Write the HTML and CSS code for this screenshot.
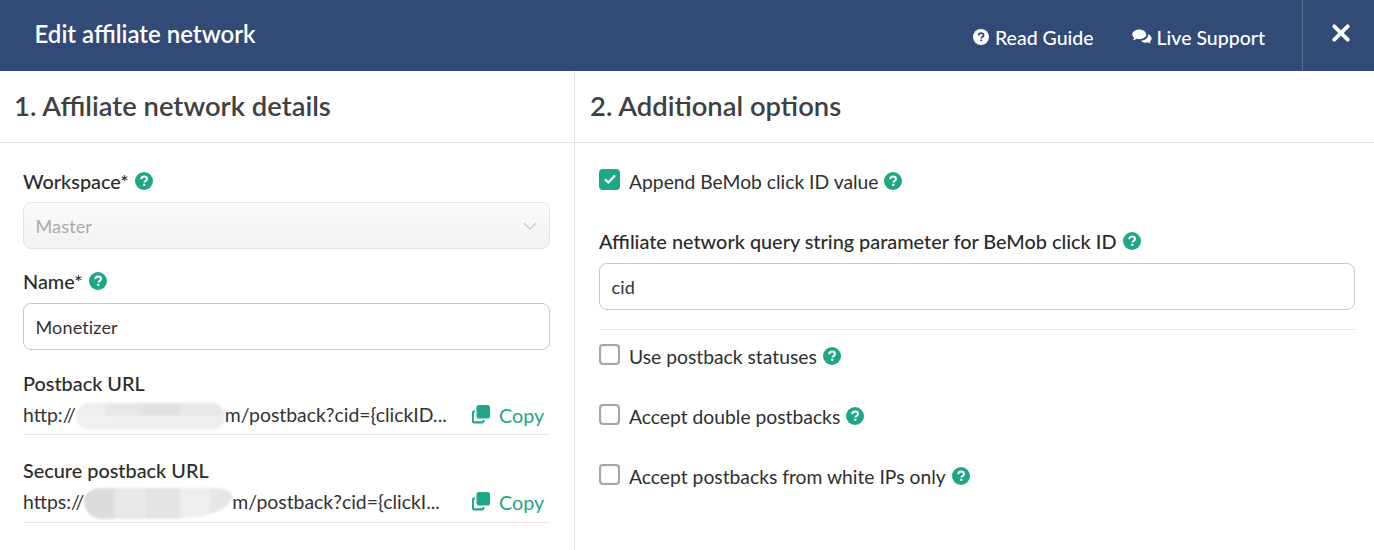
FILE: index.html
```html
<!DOCTYPE html>
<html lang="en">
<head>
<meta charset="utf-8">
<title>Edit affiliate network</title>
<link rel="stylesheet" href="styles.css">
</head>
<body>
<svg class="defs" width="0" height="0" aria-hidden="true">
  <symbol id="help" viewBox="0 0 18 18">
    <circle cx="9" cy="9" r="9" fill="currentColor"/>
    <path class="q" d="M6.200 7.200C6.300 5.500 7.500 4.600 9.100 4.600c1.700 0 2.800.9 2.800 2.300 0 1-.5 1.600-1.500 2.200-.7.400-.9.700-.9 1.300v.2" fill="none" stroke-width="2"/>
    <rect class="qd" x="8.200" y="11.800" width="2.100" height="2.100" rx=".4"/>
  </symbol>
  <symbol id="copy" viewBox="0 0 20 20">
    <path d="M1 8.500a2 2 0 0 1 2-2h1v2H3.200a.300.300 0 0 0-.3.300v7.700c0 .4.300.7.700.7h7.500a.400.400 0 0 0 .4-.4V16h2v1a2.500 2.500 0 0 1-2.500 2.500H3.500A2.500 2.500 0 0 1 1 17z" fill="currentColor"/>
    <rect x="5.500" y="1" width="13.500" height="13.500" rx="2.600" fill="currentColor"/>
  </symbol>
</svg>

<header class="topbar">
  <h1 class="topbar-title">Edit affiliate network</h1>
  <nav class="topbar-links">
    <a class="topbar-link">
      <svg class="topbar-icon" width="16" height="16"><use href="#help"/></svg>
      Read Guide
    </a>
    <a class="topbar-link">
      <svg class="topbar-chat" width="20" height="16" viewBox="0 0 20 16">
        <path d="M7.300 .5C3.500.5.300 2.800.3 5.600c0 1.300.7 2.500 1.900 3.400-.2.800-.7 1.500-1.300 2.100 1.300-.1 2.600-.6 3.500-1.300 .9.300 1.900.5 2.900.5 3.900 0 7-2.200 7-4.700S11.200.5 7.300.5z" fill="#fff"/>
        <path d="M16 5.200c.1.300.1.600.1.800 0 3.100-3.200 5.500-7.100 5.700 1 1.300 2.600 2 4.500 2 .8 0 1.600-.1 2.300-.4.800.7 1.800 1.100 3.200 1.300-.5-.5-1-1.300-1.200-2.100 1-.8 1.800-1.900 1.800-3.100 0-1.800-1.400-3.400-3.600-4.200z" fill="#fff"/>
      </svg>
      Live Support
    </a>
  </nav>
  <button class="topbar-close" type="button" aria-label="Close">
    <svg width="18" height="18" viewBox="0 0 18 18"><path d="M2.300 2.300l13.400 13.400M15.700 2.300L2.300 15.700" stroke="#fff" stroke-width="3.800" stroke-linecap="round" fill="none"/></svg>
  </button>
</header>

<main class="columns">
  <section class="col col-left">
    <h2 class="col-title">1. Affiliate network details</h2>
    <div class="col-body form-left">
      <div class="field field-workspace">
        <div class="label">Workspace* <svg class="help" width="18" height="18"><use href="#help"/></svg></div>
        <div class="input input-disabled">
          <span>Master</span>
          <svg class="chev" width="14" height="8" viewBox="0 0 14 8"><path d="M1 1l6 6 6-6" fill="none" stroke="#c9c9c9" stroke-width="1.300"/></svg>
        </div>
      </div>
      <div class="field field-name">
        <div class="label">Name* <svg class="help" width="18" height="18"><use href="#help"/></svg></div>
        <div class="input">Monetizer</div>
      </div>
      <div class="field field-url">
        <div class="label">Postback URL</div>
        <div class="url-row">
          <div class="url-text">http://<span class="blob blob-a"></span>m/postback?cid={clickID...</div>
          <a class="copy"><svg width="20" height="20"><use href="#copy"/></svg>Copy</a>
        </div>
      </div>
      <div class="field field-url2">
        <div class="label">Secure postback URL</div>
        <div class="url-row">
          <div class="url-text">https://<span class="blob blob-b"></span>m/postback?cid={clickI...</div>
          <a class="copy"><svg width="20" height="20"><use href="#copy"/></svg>Copy</a>
        </div>
      </div>
    </div>
  </section>

  <section class="col col-right">
    <h2 class="col-title">2. Additional options</h2>
    <div class="col-body form-right">
      <label class="check check-first">
        <span class="box box-on">
          <svg width="14" height="12" viewBox="0 0 14 12"><path d="M2 6.300l3.400 3.200L12 2.500" fill="none" stroke="#fff" stroke-width="2.300"/></svg>
        </span>
        Append BeMob click ID value
        <svg class="help" width="18" height="18"><use href="#help"/></svg>
      </label>
      <div class="label label-param">Affiliate network query string parameter for BeMob click ID <svg class="help" width="18" height="18"><use href="#help"/></svg></div>
      <div class="input">cid</div>
      <hr class="divider">
      <label class="check"><span class="box"></span>Use postback statuses <svg class="help" width="18" height="18"><use href="#help"/></svg></label>
      <label class="check"><span class="box"></span>Accept double postbacks <svg class="help" width="18" height="18"><use href="#help"/></svg></label>
      <label class="check"><span class="box"></span>Accept postbacks from white IPs only <svg class="help" width="18" height="18"><use href="#help"/></svg></label>
    </div>
  </section>
</main>
</body>
</html>
```

FILE: styles.css
```css
* { box-sizing: border-box; }

html, body { height: 100%; }

body {
  margin: 0;
  height: 550px;
  overflow: hidden;
  background: #fff;
  color: #2b2b2b;
  font-family: Lato, "Liberation Sans", sans-serif;
  font-size: 18px;
  display: flex;
  flex-direction: column;
}

.defs { position: absolute; }

.q { stroke: var(--q, #fff); }
.qd { fill: var(--q, #fff); }

.topbar {
  flex: none;
  height: 71px;
  background: #324a76;
  color: #fff;
  display: flex;
  align-items: stretch;
}

.topbar-title {
  margin: 0;
  flex: 1;
  padding: 16px 0 0 34.5px;
  font-size: 24px;
  line-height: 35px;
  font-weight: 600;
}

.topbar-links {
  display: flex;
  gap: 38px;
  padding: 20px 37px 0 0;
}

.topbar-link {
  display: flex;
  align-items: center;
  height: 34px;
  font-size: 19.5px;
  font-weight: 500;
}

.topbar-icon { margin-right: 6px; color: #fff; --q: #324a76; }
.topbar-chat { margin-right: 5px; }

.topbar-close {
  width: 72px;
  padding: 0 0 5px 5px;
  border: 0;
  border-left: 1px solid #5d7196;
  background: none;
  display: flex;
  align-items: center;
  justify-content: center;
}

.columns { flex: 1; display: flex; min-height: 0; }

.col { display: flex; flex-direction: column; }
.col-left { width: 575px; border-right: 1px solid #e3e3e3; }
.col-right { flex: 1; }

.col-title {
  margin: 0;
  height: 72px;
  font-size: 27.4px;
  line-height: 69px;
  font-weight: 600;
  color: #3d3f43;
  border-bottom: 1px solid #e3e3e3;
}

.col-left .col-title { padding-left: 14px; }
.col-right .col-title { padding-left: 15px; }

.col-body { flex: 1; }

.form-left { padding: 24px 24px 0 23px; }
.form-right { padding: 24px 19px 0 24px; }

.label {
  font-size: 19.85px;
  line-height: 28px;
  padding-bottom: 2px;
  font-weight: 500;
  color: #2b2b2b;
  display: flex;
  align-items: center;
}

.help { color: #1ea787; flex: none; margin-left: 6px; }

.input {
  height: 47px;
  margin-top: 6px;
  padding: 0 11.5px;
  border: 1px solid #c8c8c8;
  border-radius: 8px;
  display: flex;
  align-items: center;
  justify-content: space-between;
  font-size: 18px;
  letter-spacing: .15px;
  color: #333;
}

.input-disabled {
  margin-top: 5px;
  border-color: #e4e4e4;
  background: linear-gradient(#fcfcfc, #f1f1f1);
  color: #a9a9a9;
}

.chev { margin-right: 1px; }

.field-name { margin-top: 18px; }
.field-url { margin-top: 19px; }
.field-url2 { margin-top: 21px; }

.url-row {
  display: flex;
  justify-content: space-between;
  height: 37px;
  margin-top: -1px;
  border-bottom: 1px solid #e6e6e6;
}

.field-url2 .url-row { height: 38px; }

.url-text {
  font-size: 19.4px;
  line-height: 33px;
  color: #333;
  white-space: nowrap;
}

.blob {
  display: inline-block;
  height: 27px;
  vertical-align: -8px;
  border-radius: 14px;
  filter: blur(1px);
}

.blob-a {
  width: 149px;
  background:
    linear-gradient(90deg, #ededed 0 20%, #e7e7e7 20% 45%, #e1e1e1 45% 70%, #e8e8e8 70% 100%) top / 100% 50% no-repeat,
    linear-gradient(90deg, #f0f0f0 0 25%, #eeeeee 25% 100%) bottom / 100% 50% no-repeat;
}

.blob-b {
  width: 148px;
  height: 31px;
  vertical-align: -10px;
  border-radius: 18px 18px 60px 18px / 12px 8px 24px 18px;
  background:
    linear-gradient(90deg, #dcdcdc 0 20%, #e8e8e8 20% 42%, #e4e4e4 42% 65%, #eeeeee 65% 85%, #e6e6e6 85% 100%);
}

.copy {
  flex: none;
  width: 79px;
  display: flex;
  align-items: center;
  height: 33px;
  font-size: 19.8px;
  color: #1ea787;
}

.copy svg { margin-right: 8px; margin-top: -2px; }

.check {
  display: flex;
  align-items: center;
  height: 30px;
  font-size: 19.3px;
  color: #2f2f2f;
  margin-bottom: 30px;
}

.box {
  width: 21px;
  height: 21px;
  flex: none;
  margin-right: 9px;
  margin-top: -4px;
  border: 2px solid #a6a6a6;
  box-shadow: inset 0 0 1px #a6a6a6;
  border-radius: 4px;
  display: flex;
  align-items: center;
  justify-content: center;
}

.box-on { background: #1ea787; border-color: #1ea787; box-shadow: none; }

.check-first { margin-top: -1px; margin-bottom: 0; }

.label-param { margin-top: 31px; }

.divider {
  margin: 19px 0 11px;
  border: 0;
  border-top: 1px solid #e6e6e6;
}
```
